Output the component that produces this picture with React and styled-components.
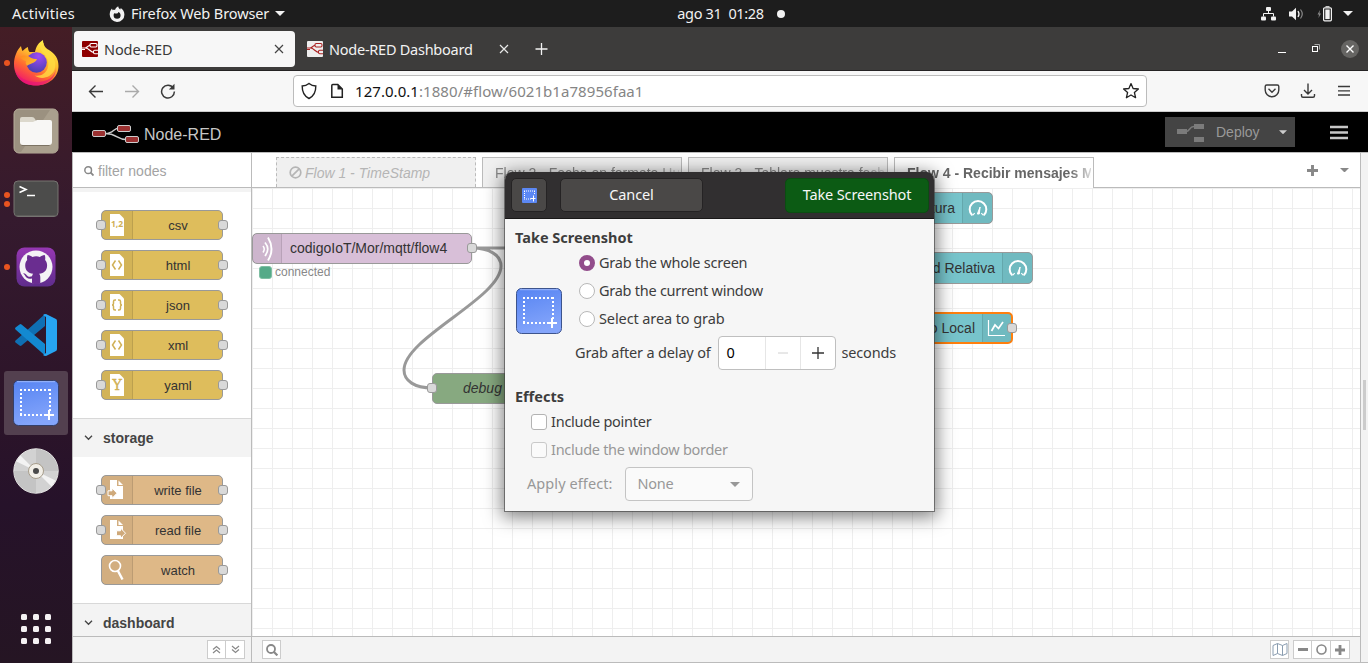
import React from "react";
import styled, { createGlobalStyle, css } from "styled-components";

const GlobalStyle = createGlobalStyle`
  * { box-sizing: border-box; }
  body { margin: 0; overflow: hidden; background: #fff; }
`;

const UI = '"Noto Sans", "Open Sans", sans-serif';
const ARIAL = '"Liberation Sans", Arial, sans-serif';

const Screen = styled.div`
  position: relative;
  width: 1368px;
  height: 663px;
  overflow: hidden;
  display: flex;
  flex-direction: column;
  font-family: ${UI};
  font-size: 14.5px;
`;

const Label = styled.span`
  white-space: pre;
  line-height: 20px;
  margin-top: ${(p) => (p.$flat ? 0 : -2)}px;
  font-size: ${(p) => p.$size || 14.5}px;
  letter-spacing: ${(p) => p.$track || 0}px;
  color: ${(p) => p.$color || "inherit"};
`;
const Heading = styled.h2`
  margin: ${(p) => p.$top || 0}px 0 0;
  font-size: 14.5px;
  line-height: 20px;
  font-weight: 700;
`;

/* ---------- top bar ---------- */
const TopBar = styled.header`
  height: 27px;
  flex: none;
  background: #1d1d1d;
  color: #f2f2f2;
  display: grid;
  grid-template-columns: 1fr auto 1fr;
  align-items: center;
`;
const TopLeft = styled.div`
  display: flex;
  align-items: center;
  padding-left: 12px;
`;
const AppMenu = styled.div`
  display: flex;
  align-items: center;
  margin-left: 34px;
  gap: 6px;
`;
const Clock = styled.div`
  display: flex;
  align-items: center;
  gap: 7px;
  margin-left: 100px;
`;
const Status = styled.div`
  display: flex;
  align-items: center;
  justify-content: flex-end;
  gap: 13px;
  padding-right: 15px;
  & > svg:last-child { margin-left: -2px; }
`;

/* ---------- dock ---------- */
const Desktop = styled.div`
  flex: 1;
  display: flex;
  min-height: 0;
`;
const Dock = styled.nav`
  width: 72px;
  flex: none;
  padding-top: 4px;
  display: flex;
  flex-direction: column;
  align-items: center;
  gap: 4px;
  background: linear-gradient(180deg, #441d25 0%, #351a2e 30%, #2c1429 60%, #26122a 75%, #251523 100%);
`;
const DockSlot = styled.div`
  position: relative;
  width: 64px;
  height: 64px;
  border-radius: 3px;
  display: flex;
  align-items: center;
  justify-content: center;
  background: ${(p) => (p.$active ? "#53404f" : "transparent")};
`;
const Dots = styled.div`
  position: absolute;
  left: 0;
  top: 0;
  height: 100%;
  display: flex;
  flex-direction: column;
  justify-content: center;
  gap: 3px;
  i {
    width: 6px;
    height: 6px;
    border-radius: 50%;
    background: #e95420;
  }
`;
const AppsGrid = styled.div`
  margin-top: auto;
  margin-bottom: 19px;
  display: grid;
  grid-template-columns: repeat(3, 6px);
  gap: 6px;
  i {
    height: 6px;
    border-radius: 1.5px;
    background: #f4f1f3;
  }
`;

/* ---------- browser ---------- */
const Browser = styled.main`
  flex: 1;
  min-width: 0;
  display: flex;
  flex-direction: column;
`;
const TabStrip = styled.div`
  height: 44px;
  flex: none;
  background: #3d3c3b;
  border-bottom: 1px solid #252324;
  display: flex;
  align-items: center;
  padding: 0 9px 0 2px;
  color: #f2f2f2;
`;
const BrowserTab = styled.div`
  width: ${(p) => p.$width}px;
  height: 36px;
  display: flex;
  align-items: center;
  gap: 6px;
  padding: 0 11px 0 8px;
  border-radius: 4px;
  margin-right: 4px;
  ${(p) =>
    p.$active &&
    css`
      background: #f7f7f7;
      color: #3a3a3a;
    `}
  & > svg:last-child { margin-left: auto; }
`;
const WindowButtons = styled.div`
  margin-left: auto;
  display: flex;
  align-items: center;
  gap: 25px;
`;
const CloseCircle = styled.div`
  width: 18px;
  height: 18px;
  margin-left: -5px;
  border-radius: 50%;
  background: #666563;
  display: flex;
  align-items: center;
  justify-content: center;
`;
const NavBar = styled.div`
  height: 41px;
  flex: none;
  background: #f7f7f7;
  border-bottom: 1px solid #cbcbcb;
  display: flex;
  align-items: center;
`;
const NavButtons = styled.div`
  width: 221px;
  display: flex;
  gap: 20px;
  padding-left: 16px;
`;
const UrlField = styled.div`
  width: 854px;
  height: 32px;
  background: #fff;
  border: 1px solid #bcbcbc;
  border-radius: 4px;
  display: flex;
  align-items: center;
  padding: 0 6px;
  & > svg:last-child { margin-left: auto; }
`;
const NavRight = styled.div`
  margin-left: auto;
  display: flex;
  gap: 19.5px;
  padding-right: 15px;
`;

/* ---------- node-red ---------- */
const EditorHeader = styled.div`
  height: 40px;
  flex: none;
  background: #000;
  display: flex;
  align-items: center;
  padding: 0 20px 0 19px;
  font: 16px ${ARIAL};
  color: #c7c7c7;
  svg { flex: none; }
`;
const Brand = styled.div`
  display: flex;
  align-items: center;
  gap: 4px;
  padding-top: 6px;
`;
const Deploy = styled.div`
  margin-left: auto;
  margin-right: 35px;
  width: 130px;
  height: 30px;
  background: #444;
  color: #999;
  font-size: 14px;
  display: flex;
  align-items: center;
  padding: 0 8px 0 12px;
  gap: 11px;
  & > svg:last-child { margin-left: auto; }
`;
const Editor = styled.div`
  flex: 1;
  min-height: 0;
  display: flex;
  border: solid #bbb;
  border-width: 1px 0 1px 1px;
  font-family: ${ARIAL};
`;
const Palette = styled.aside`
  width: 179px;
  flex: none;
  border-right: 1px solid #bbb;
  display: flex;
  flex-direction: column;
`;
const Search = styled.div`
  height: 35px;
  flex: none;
  border-bottom: 1px solid #bbb;
  display: flex;
  align-items: center;
  padding: 1px 0 0 11px;
  gap: 4px;
  font-size: 14px;
  color: #a3a3a3;
`;
const PaletteList = styled.div`
  flex: 1;
  min-height: 0;
  overflow: hidden;
  border-top: 4px solid #f3f3f3;
`;
const Category = styled.div`
  height: 39px;
  background: #f3f3f3;
  border-top: 1px solid #d8d8d8;
  display: flex;
  align-items: center;
  gap: 10px;
  padding-left: 11px;
  font-size: 14px;
  font-weight: 700;
  color: #444;
`;
const NodeStack = styled.div`
  padding: 18px 0 18px 28px;
  display: flex;
  flex-direction: column;
  gap: 10px;
`;
const NodeBox = styled.div`
  position: relative;
  width: ${(p) => p.$width || 122}px;
  height: ${(p) => p.$height || 30}px;
  border: ${(p) => (p.$selected ? "2px solid #ff7f0e" : "1px solid #999")};
  border-radius: 5px;
  background: ${(p) => p.$color};
  display: flex;
  font-size: ${(p) => p.$size || 13}px;
  color: #333;
`;
const NodeIcon = styled.div`
  width: ${(p) => p.$w || 31}px;
  flex: none;
  background: rgba(0, 0, 0, 0.05);
  border: solid rgba(0, 0, 0, 0.1);
  border-width: ${(p) => (p.$right ? "0 0 0 1px" : "0 1px 0 0")};
  display: flex;
  align-items: center;
  justify-content: center;
`;
const NodeText = styled.div`
  flex: 1;
  display: flex;
  align-items: center;
  white-space: nowrap;
  justify-content: ${(p) => p.$align || "center"};
  padding: ${(p) => (p.$align ? "0 7px 1px 8px" : "1px 7px 0 8px")};
  font-style: ${(p) => (p.$italic ? "italic" : "normal")};
`;
const Port = styled.i`
  position: absolute;
  ${(p) => (p.$side === "in" ? "left: -6px;" : "right: -6px;")}
  top: 9px;
  width: 10px;
  height: 10px;
  background: #d9d9d9;
  border: 1px solid #999;
  border-radius: 3px;
`;
const Footer = styled.div`
  height: 26px;
  flex: none;
  background: #f3f3f3;
  border-top: 1px solid #bbb;
  display: flex;
  align-items: center;
  justify-content: ${(p) => (p.$end ? "flex-end" : "space-between")};
  padding: ${(p) => p.$pad};
`;
const Group = styled.div`
  display: flex;
  gap: 4px;
`;
const FootButton = styled.div`
  width: ${(p) => p.$w || 19}px;
  height: 19px;
  margin-right: ${(p) => (p.$joined ? -1 : 0)}px;
  border: 1px solid #ccc;
  background: #fff;
  display: flex;
  align-items: center;
  justify-content: center;
`;
const Joined = styled.div`
  display: flex;
`;
const Workspace = styled.section`
  flex: 1;
  min-width: 0;
  display: flex;
  flex-direction: column;
`;
const FlowTabs = styled.div`
  height: 35px;
  flex: none;
  border-bottom: 1px solid #bbb;
  display: flex;
  align-items: flex-end;
  gap: 6px;
  padding: 0 11px 0 24px;
`;
const FlowTab = styled.div`
  width: 200px;
  height: ${(p) => (p.$active ? 31 : 30)}px;
  margin-bottom: ${(p) => (p.$active ? -1 : 0)}px;
  padding: 0 2px 0 12px;
  display: flex;
  align-items: center;
  gap: 3px;
  overflow: hidden;
  white-space: nowrap;
  font-size: 14px;
  border: 1px ${(p) => (p.$disabled ? "dashed" : "solid")} #bbb;
  border-bottom: 0;
  background: ${(p) => (p.$active ? "#fff" : "#f0f0f0")};
  color: ${(p) => (p.$disabled ? "#b5b5b5" : p.$active ? "#666" : "#888")};
  font-weight: ${(p) => (p.$active ? 700 : 400)};
  font-style: ${(p) => (p.$disabled ? "italic" : "normal")};
  svg { flex: none; }
  span {
    overflow: hidden;
    ${(p) => !p.$disabled && "mask-image: linear-gradient(90deg, #000 calc(100% - 22px), rgba(0,0,0,.25));"}
  }
`;
const TabActions = styled.div`
  margin-left: auto;
  height: 34px;
  display: flex;
  align-items: center;
  gap: 22px;
`;
const Canvas = styled.div`
  position: relative;
  flex: 1;
  min-height: 0;
  overflow: hidden;
  background-color: #fff;
  background-image: linear-gradient(#eee 1px, transparent 1px), linear-gradient(90deg, #eee 1px, transparent 1px);
  background-size: 20px 20px;
`;
const Wires = styled.svg`
  position: absolute;
  left: 0;
  top: 0;
`;
const Placed = styled.div`
  position: absolute;
  left: ${(p) => p.$x}px;
  top: ${(p) => p.$y}px;
`;
const NodeStatus = styled.div`
  display: flex;
  align-items: center;
  gap: 3px;
  font-size: 12px;
  color: #888;
  i {
    width: 13px;
    height: 13px;
    border-radius: 3px;
    background: #5a8;
    border: 1px solid #7fbfa3;
  }
`;
const Separator = styled.div`
  width: 8px;
  flex: none;
  border-left: 1px solid #bbb;
  background: #f3f3f3;
  display: flex;
  align-items: center;
  padding: 0 0 0 2px;
  i {
    width: 3px;
    height: 50px;
    background: #ccc;
    margin-top: -6px;
  }
`;

/* ---------- dialog ---------- */
const Dialog = styled.div`
  position: absolute;
  left: 504px;
  top: 172px;
  width: 431px;
  height: 340px;
  border: 1px solid rgba(60, 60, 60, 0.6);
  border-top: 0;
  border-radius: 8px 8px 0 0;
  box-shadow: 0 3px 18px 2px rgba(0, 0, 0, 0.5);
  background: #f6f6f6;
  background-clip: padding-box;
  overflow: hidden;
  color: #3d3d3d;
`;
const DialogBar = styled.div`
  height: 47px;
  background: #312f30;
  border-bottom: 1px solid #191818;
  display: flex;
  align-items: center;
  padding: 0 5px 0 6px;
  color: #f7f7f7;
`;
const BarButton = styled.div`
  width: ${(p) => p.$w}px;
  height: ${(p) => (p.$primary ? 35 : 34)}px;
  border-radius: 5px;
  background: ${(p) => (p.$primary ? "#0c5b14" : "#4a4847")};
  border: 1px solid ${(p) => (p.$primary ? "#0b4d12" : "#252324")};
  display: flex;
  align-items: center;
  justify-content: center;
  & + & { margin-left: 13px; }
  &:last-child { margin-left: auto; }
`;
const DialogBody = styled.div`
  padding: 8px 10px;
  display: flex;
  flex-direction: column;
`;
const Choices = styled.div`
  display: flex;
  margin-top: 2px;
`;
const ChoiceIcon = styled.div`
  width: 64px;
  padding: 39px 0 0 1px;
`;
const Option = styled.div`
  height: 28px;
  display: flex;
  align-items: center;
  gap: 4px;
  color: ${(p) => (p.$off ? "#989898" : "inherit")};
`;
const Radio = styled.i`
  width: 16px;
  height: 16px;
  border-radius: 50%;
  background: #fff;
  border: ${(p) => (p.$on ? "5px solid #924d8b" : "1px solid #b8b8b8")};
`;
const Check = styled.i`
  width: 16px;
  height: 16px;
  border-radius: 3px;
  background: ${(p) => (p.$off ? "#fafafa" : "#fff")};
  border: 1px solid ${(p) => (p.$off ? "#c9c9c9" : "#b3b3b3")};
`;
const DelayRow = styled.div`
  display: flex;
  align-items: center;
  gap: 6px;
  padding-left: 60px;
  margin-top: -2px;
`;
const Spin = styled.div`
  width: 118px;
  height: 34px;
  margin-left: 1px;
  border: 1px solid #bfbfbf;
  border-radius: 4px;
  background: #fff;
  display: flex;
  color: #000;
`;
const SpinCell = styled.div`
  flex: ${(p) => (p.$wide ? "1" : "0 0 35px")};
  padding-left: ${(p) => (p.$wide ? 8 : 0)}px;
  display: flex;
  align-items: center;
  justify-content: ${(p) => (p.$wide ? "flex-start" : "center")};
  & + & { border-left: 1px solid #e6e6e6; }
`;
const Effects = styled.div`
  padding: 2px 0 0 16px;
`;
const EffectRow = styled.div`
  display: flex;
  align-items: center;
  gap: 13px;
  padding-left: 12px;
  margin-top: 3px;
  color: #989898;
`;
const Select = styled.div`
  width: 128px;
  height: 34px;
  border: 1px solid #c4c4c4;
  border-radius: 4px;
  background: #fafafa;
  display: flex;
  align-items: center;
  justify-content: space-between;
  padding: 0 12px 0 11px;
`;

/* ---------- drawings ---------- */
const Caret = ({ w = 10, h = 5, color = "#f2f2f2" }) => (
  <svg width={w} height={h} viewBox="0 0 10 5"><path d="M0 0h10l-5 5z" fill={color} /></svg>
);
const Cross = ({ color }) => (
  <svg width="10" height="10" viewBox="0 0 10 10" stroke={color} strokeWidth="1.2"><path d="M1 1l8 8M9 1l-8 8" /></svg>
);
const Plus = ({ s = 12, w = 1.2, color = "#333" }) => (
  <svg width={s} height={s} viewBox="0 0 12 12" stroke={color} strokeWidth={w}><path d="M6 0v12M0 6h12" /></svg>
);
const Magnifier = ({ s = 10, color = "#888" }) => (
  <svg width={s} height={s} viewBox="0 0 12 12" fill="none" stroke={color} strokeWidth="1.8"><circle cx="5" cy="5" r="4" /><path d="M8 8l3.4 3.4" strokeWidth="2.2" /></svg>
);
const Favicon = ({ bg, fg }) => (
  <svg width="16" height="16" viewBox="0 0 16 16" fill="none" stroke={fg} strokeWidth="1.1">
    <rect width="16" height="16" rx="1" fill={bg} stroke="none" />
    <path d="M0 7h3C5.500 7 5.500 4.500 8 4.500M3.500 7C7 7 8.500 11.500 12 11.500M0 8.500h3" />
    <rect x="8" y="2.500" width="7" height="3.500" rx="1.200" />
    <rect x="11.500" y="9.300" width="5.500" height="3.500" rx="1.200" />
  </svg>
);
const ShotIcon = ({ s = 46, edge = "#3d548d" }) => (
  <svg width={s} height={s} viewBox="0 0 46 46">
    <defs>
      <linearGradient id="shot" x1="0" y1="0" x2="0.300" y2="1">
        <stop offset="0" stopColor="#5583f2" /><stop offset="1" stopColor="#84a5fb" />
      </linearGradient>
    </defs>
    <rect x="0.500" y="0.500" width="45" height="45" rx="5" fill="url(#shot)" stroke={edge} />
    <path d="M4 1.700h38" stroke="#9db8fb" />
    <path d="M7 10h30M7 35h24M8 9v26M37 9v22" stroke="#fff" strokeWidth="2" strokeDasharray="2 2" fill="none" />
    <path d="M36 30v10M31 35h10" stroke="#fff" strokeWidth="2" />
  </svg>
);
const SmallShot = () => (
  <svg width="15" height="15" viewBox="0 0 15 15">
    <rect width="15" height="15" rx="1" fill="#5c88f4" />
    <path d="M2 3h11M2 11h7M2.500 3v8M12.500 3v4" stroke="#fff" strokeDasharray="1 1" />
    <path d="M11.500 7.500v6M8.500 10.500h5" stroke="#fff" />
  </svg>
);
const FirefoxGlyph = () => (
  <svg width="16" height="16" viewBox="0 0 16 16">
    <path fillRule="evenodd" fill="#f2f2f2" d="M.7 8.600C.7 6 1.600 4 3 2.600l.6 1.700c.8-.5 1.500-.6 2.400-.4C6.500 2.300 7.800 1 9.200.3c.1 1.600.9 2.300 2 3.100.4-.5.5-.8.500-1.300 2.300 1.500 3.700 3.700 3.700 6.300A7.300 7.300 0 0 1 8 15.900 7.300 7.300 0 0 1 .7 8.600zM5.200 7.200c-.4.7-.6 1.200-.6 2a3.500 3.500 0 0 0 7 0c0-1.500-.9-2.800-2.200-3.300-.2.800-.6 1.300-1.300 1.600-.9.300-1.500 0-2.900-.3z" />
  </svg>
);
const Firefox = () => (
  <svg width="46" height="48" viewBox="0 0 46 48">
    <defs>
      <linearGradient id="ffa" x1="0.800" y1="0.100" x2="0.300" y2="1">
        <stop offset="0" stopColor="#fff04a" /><stop offset="0.350" stopColor="#ffbd2e" /><stop offset="0.650" stopColor="#ff6a30" /><stop offset="1" stopColor="#f0136e" />
      </linearGradient>
      <radialGradient id="ffb" cx="0.600" cy="0.200" r="0.800">
        <stop offset="0" stopColor="#a04bf5" /><stop offset="1" stopColor="#4b3fb0" />
      </radialGradient>
      <linearGradient id="ffc" x1="0" y1="0" x2="1" y2="0.500">
        <stop offset="0" stopColor="#ff8a1f" /><stop offset="1" stopColor="#ffb62e" />
      </linearGradient>
    </defs>
    <path d="M1 25C1 18 4 11 8 7c.4 2.500 1 4 1.500 5 1.500-1.500 3.500-3 5.500-4 0 2 .5 4 1.500 5H22c1-5 3-9 8-12 0 5 2 8 6 10 6 4 9.500 8 9.500 16C45.500 38 36 46.500 23 46.500S1 38 1 25z" fill="url(#ffa)" />
    <path d="M43 29c-1 9-9 14-19 14S5 39 2 31c2 10 10 15.500 21 15.500S43 39 43 29z" fill="#e2127c" opacity="0.600" />
    <circle cx="23.500" cy="23.500" r="10.300" fill="url(#ffb)" />
    <path d="M7 18c4-2.500 8-1.500 10.500.500 2 1.500 4 1.300 6.500 1.500-.6 2.500-3 3.300-5.500 4.500-2.500 1-3.500 1.500-4.500 2.500-1.500-2-1.500-4-1-5-2-.3-4-1.500-6-4z" fill="url(#ffc)" />
    <path d="M31 15c4 4 5.500 9 3.500 14.500-2 5.500-7 8-13 7 7 5 17 2 20-6 2.500-7-1-13-5.500-17-3-2.500-5-6-5.500-10-3.500 4-3.500 8 .5 11.500z" fill="#ffdc42" opacity="0.800" />
  </svg>
);
const Files = () => (
  <svg width="46" height="46" viewBox="0 0 46 46">
    <rect x="1" y="1" width="44" height="44" rx="5" fill="#9b9180" stroke="#b8ae9b" />
    <path d="M37 2h4a3 3 0 0 1 3 3v36a3 3 0 0 1-3 3H8z" fill="#aaa08e" />
    <path d="M7 14v-3q0-2 2-2h10q2 0 3 2l1 2h13v4H7z" fill="#dcd8cc" />
    <path d="M7 14h13l4-2h13q2 0 2 2v20q0 3-3 3H10q-3 0-3-3z" fill="#f8f7f5" />
    <path d="M8.500 37.500h28" stroke="#7c7363" />
  </svg>
);
const Terminal = () => (
  <svg width="46" height="38" viewBox="0 0 46 38">
    <rect x="1" y="1" width="44" height="35.500" rx="4" fill="#4c4c4b" stroke="#767471" />
    <path d="M2 35.500h42" stroke="#5e5d5b" />
    <path d="M6.500 6.500l6.500 3-6.500 3" fill="none" stroke="#fff" strokeWidth="1.600" />
    <path d="M14 15.500h8" stroke="#fff" strokeWidth="1.500" />
  </svg>
);
const Github = () => (
  <svg width="40" height="40" viewBox="0 0 40 40">
    <defs><linearGradient id="gh" x1="0" y1="0" x2="0" y2="1"><stop offset="0" stopColor="#9637b3" /><stop offset="1" stopColor="#5f2d8c" /></linearGradient></defs>
    <rect x="0.500" y="0.500" width="39" height="39" rx="8" fill="url(#gh)" />
    <circle cx="20" cy="20" r="16.500" fill="#f4f3f5" />
    <path d="M16 36.500v-5c-4 1-6-1-7-3-.6-1-1.500-2-2-2.300 2-.4 3 1 4 2.300 1 1.300 3 1.700 5 .8.200-1.200.6-2 1.200-2.600-5-.7-8-3-8-8.500 0-2.200.8-4 2-5.300-.3-1.500-.3-3.500.4-5 2 .2 3.500 1 4.800 2 2.500-.7 5-.7 7.500 0 1.300-1 2.800-1.800 4.800-2 .7 1.500.7 3.500.4 5 1.200 1.300 2 3.100 2 5.300 0 5.500-3 7.800-8 8.500.8.800 1.200 2 1.200 3.600v6.200c-2.500.8-5.500.8-8.300 0z" fill="#6a2d90" />
  </svg>
);
const VsCode = () => (
  <svg width="44" height="44" viewBox="0 0 44 44">
    <path d="M1.500 27.500l3.500-3L31 1v12L7.500 32.500q-1 .8-2 0l-4-3q-1-1 0-2z" fill="#0f6fb3" />
    <path d="M1.500 16.500q-1-1 0-2l4-3q1-.8 2 0L31 31v11.500z" fill="#1389d1" />
    <path d="M32 1l10 5q1 .5 1 2v28q0 1.500-1 2l-10 5q-2 0-3-1l3-2V4l-3-2q1-1 3-1z" fill="#27a5f2" />
  </svg>
);
const Disc = () => (
  <svg width="46" height="46" viewBox="0 0 46 46">
    <circle cx="23" cy="23" r="22.200" fill="#d2d2d2" stroke="#e8e8e6" />
    <path d="M23 23V1A22 22 0 0 1 45 23z" fill="#c4c4c4" /><path d="M23 23v22A22 22 0 0 1 1 23z" fill="#c4c4c4" />
    <path d="M23 23L3.500 13.500l4-6zM23 23l19.500 9.500-4 6z" fill="#f3f3f3" />
    <circle cx="23" cy="23" r="7.500" fill="#f2efe8" stroke="#a79d8b" />
    <circle cx="23" cy="23" r="3" fill="#4a4a4a" />
  </svg>
);
const PageIcon = ({ kind, bg }) => (
  <svg width="18" height="24" viewBox="0 0 18 24">
    <path d="M2 1h9.500L16 5.500V23H2z" fill="#fff" />
    <g fill="none" stroke={bg} strokeWidth="1.500">
      {(kind === "html" || kind === "xml") && <path d="M7.500 7.500L4.500 12l3 4.500M10.500 7.500l3 4.500-3 4.500" />}
      {kind === "json" && <path d="M8 7H7q-1.500 0-1.500 1.500v2Q5.500 12 4 12q1.500 0 1.500 1.500v2Q5.500 17 7 17h1M10 7h1q1.500 0 1.500 1.500v2q0 1.500 1.500 1.500-1.500 0-1.500 1.500v2q0 1.500-1.500 1.500h-1" />}
    </g>
    {kind === "csv" && <text x="9" y="14" fontFamily="Noto Sans" fontWeight="700" fontSize="8.500" textAnchor="middle" fill={bg}>1,2</text>}
    {kind === "yaml" && <text x="9" y="17" fontFamily="DejaVu Serif" fontSize="14" textAnchor="middle" fill={bg} stroke={bg} strokeWidth="0.400">Y</text>}
  </svg>
);
const FileIcon = ({ out }) => (
  <svg width="20" height="22" viewBox="0 0 20 22">
    {out ? (
      <>
        <path d="M3 1h7v6h6v13H3z" fill="#fff" /><path d="M11.500 1.500L16 6h-4.500z" fill="#fff" />
        <path d="M9.500 11.800h4V9l5 5.200-5 5.200v-2.700h-4z" fill="#cfa97a" stroke="#fff" />
      </>
    ) : (
      <>
        <path d="M3 1h7v6h6v13H3z" fill="#fff" /><path d="M11.500 1.500L16 6h-4.500z" fill="#fff" />
        <path d="M1 11.800h4V9l5 5.200-5 5.200v-2.700H1z" fill="#cfa97a" stroke="#fff" />
      </>
    )}
  </svg>
);
const WatchIcon = () => (
  <svg width="18" height="22" viewBox="0 0 18 22" fill="none" stroke="#fff">
    <circle cx="7" cy="7" r="5.500" strokeWidth="1.600" /><path d="M10 12l4.500 8.500" strokeWidth="2.400" />
  </svg>
);
const Gauge = () => (
  <svg width="22" height="20" viewBox="0 0 22 20" fill="none" stroke="#fff" strokeWidth="2">
    <path d="M5.200 17.300A8.300 8.300 0 1 1 16.800 17.300" /><path d="M5.500 17.300l2.200-2.200M16.500 17.300l-2.200-2.200" strokeWidth="1.200" /><path d="M10.300 16l2.800-7-.8 7z" strokeWidth="1" fill="#fff" />
  </svg>
);
const ChartIcon = () => (
  <svg width="20" height="20" viewBox="0 0 20 20" fill="none" stroke="#fff" strokeWidth="1.200">
    <path d="M1.500 2v15.500H18" /><path d="M4.500 13l3.500-6 3.500 3.500L16 4" strokeWidth="1.700" />
  </svg>
);
const MqttIcon = () => (
  <svg width="20" height="26" viewBox="0 0 20 26" fill="none" stroke="#fff">
    <path d="M6 10q2.500 3 0 6.500" strokeWidth="1.500" /><path d="M8 6.500q5.500 6.500 0 13.500" strokeWidth="1.700" /><path d="M11 1.500q7 11.500 0 23" strokeWidth="1.900" />
  </svg>
);
const Chevron = () => (
  <svg width="9" height="6" viewBox="0 0 9 6" fill="none" stroke="#444" strokeWidth="1.300"><path d="M1 .8l3.500 3.500L8 .8" /></svg>
);
const DoubleChevron = ({ down }) => (
  <svg width="9" height="9" viewBox="0 0 9 9" fill="none" stroke="#888" strokeWidth="1.200" transform={down ? "rotate(180)" : undefined}><path d="M1 4.500l3.500-3L8 4.500M1 8l3.500-3L8 8" /></svg>
);

const PaletteNode = ({ name, color, icon, noInput }) => (
  <NodeBox $color={color}>
    <NodeIcon>{icon}</NodeIcon>
    <NodeText>{name}</NodeText>
    {!noInput && <Port $side="in" />}
    <Port $side="out" />
  </NodeBox>
);

const YELLOW = "#debd5c";
const TAN = "#deb887";
const TEAL = "#77c4cb";

export default function App() {
  return (
    <>
      <GlobalStyle />
      <Screen>
        <TopBar>
          <TopLeft>
            <Label $track={0.25}>Activities</Label>
            <AppMenu>
              <FirefoxGlyph />
              <Label $track={-0.1}>Firefox Web Browser</Label>
              <Caret />
            </AppMenu>
          </TopLeft>
          <Clock>
            <Label $track={-0.35}>ago 31</Label>
            <Label $track={-0.35}>01:28</Label>
            <svg width="20" height="8" viewBox="0 0 20 8"><circle cx="10" cy="4" r="4" fill="#f2f2f2" /></svg>
          </Clock>
          <Status>
            <svg width="15" height="14" viewBox="0 0 15 14" fill="#f2f2f2"><rect x="5" y="0" width="5" height="4" rx="1" /><rect x="0" y="9.500" width="5" height="4" rx="1" /><rect x="10" y="9.500" width="5" height="4" rx="1" /><path d="M2.500 9.500v-3h10v3M7.500 4v3" fill="none" stroke="#f2f2f2" /></svg>
            <svg width="15" height="14" viewBox="0 0 15 14"><path d="M0 4.500h3L7 .8v12.400L3 9.500H0z" fill="#f2f2f2" /><path d="M9 4q2 3 0 6" stroke="#f2f2f2" fill="none" strokeWidth="1.300" /><path d="M11.500 2.500q3.500 4.500 0 9" stroke="#8a8a8a" fill="none" strokeWidth="1.200" /></svg>
            <svg width="15" height="16" viewBox="0 0 15 16"><path d="M3 4L.5 8.500H2L1.500 12 4 7.500H2.500z" fill="#8a8a8a" /><rect x="6.600" y="1.800" width="7.800" height="13" rx="1" fill="none" stroke="#f2f2f2" strokeWidth="1.200" /><rect x="8.300" y="3.500" width="4.400" height="9.600" fill="#f2f2f2" /><path d="M8.500 .7h4" stroke="#f2f2f2" /></svg>
            <Caret />
          </Status>
        </TopBar>
        <Desktop>
          <Dock>
            <DockSlot><Dots><i /></Dots><Firefox /></DockSlot>
            <DockSlot><Files /></DockSlot>
            <DockSlot><Dots><i /><i /></Dots><Terminal /></DockSlot>
            <DockSlot><Dots><i /></Dots><Github /></DockSlot>
            <DockSlot><VsCode /></DockSlot>
            <DockSlot $active><ShotIcon edge="#34406b" /></DockSlot>
            <DockSlot><Disc /></DockSlot>
            <AppsGrid>{Array.from({ length: 9 }, (_, i) => <i key={i} />)}</AppsGrid>
          </Dock>
          <Browser>
            <TabStrip>
              <BrowserTab $active $width={221}>
                <Favicon bg="#8f0000" fg="#fff" />
                <Label $flat $track={-0.1}>Node-RED</Label>
                <Cross color="#444" />
              </BrowserTab>
              <BrowserTab $width={221}>
                <Favicon bg="#eee" fg="#a22" />
                <Label $flat $track={-0.25}>Node-RED Dashboard</Label>
                <Cross color="#e8e8e8" />
              </BrowserTab>
              <svg width="34" height="12" viewBox="0 0 34 12" stroke="#f2f2f2" strokeWidth="1.300"><path d="M17.500 0v12M11.500 6h12" /></svg>
              <WindowButtons>
                <svg width="9" height="10"><path d="M0 8.500h8" stroke="#fff" /></svg>
                <svg width="9" height="9" viewBox="0 0 9 9" fill="none"><rect x="0.500" y="2.500" width="5" height="5" stroke="#fff" /><path d="M2.500 .5h5v5" stroke="#aaa" /></svg>
                <CloseCircle><svg width="8" height="8" viewBox="0 0 8 8" stroke="#fff" strokeWidth="1.400"><path d="M.5.5l7 7M7.500.5l-7 7" /></svg></CloseCircle>
              </WindowButtons>
            </TabStrip>
            <NavBar>
              <NavButtons>
                <svg width="16" height="16" viewBox="0 0 16 16" fill="none" stroke="#3a3a3a" strokeWidth="1.400"><path d="M15 8.500H1.500M7.500 2.500l-6 6 6 6" /></svg>
                <svg width="16" height="16" viewBox="0 0 16 16" fill="none" stroke="#aaa" strokeWidth="1.400"><path d="M1 8.500h13.500M8.500 2.500l6 6-6 6" /></svg>
                <svg width="16" height="16" viewBox="0 0 16 16" fill="none" stroke="#3a3a3a" strokeWidth="1.500"><path d="M13.300 5A6.400 6.400 0 1 0 14.400 8.500" /><path d="M14.500.8v5.700H8.800z" fill="#3a3a3a" stroke="none" /></svg>
              </NavButtons>
              <UrlField>
                <svg width="18" height="18" viewBox="0 0 18 18" fill="none" stroke="#222" strokeWidth="1.400"><path d="M9 1.500Q12 3.800 15.800 4 16 13 9 16.500 2 13 2.200 4 6 3.800 9 1.500z" /></svg>
                <svg width="37" height="16" viewBox="0 0 37 16" fill="none" stroke="#222" strokeWidth="1.500"><path d="M13.800 2.500v11.800h10.500V6L19.800 1.500h-5q-1 0-1 1z" /><path d="M19.500 1.500v5h5z" fill="#222" stroke="none" /></svg>
                <Label $flat $size={15} $color="#111" $track={0.05}>127.0.0.1</Label>
                <Label $flat $size={15} $color="#858585" $track={0.06}>:1880/#flow/6021b1a78956faa1</Label>
                <svg width="18" height="18" viewBox="0 0 18 18" fill="none" stroke="#222" strokeWidth="1.300" strokeLinejoin="round"><path d="M9 1.600l2.100 4.900 5.300.5-4 3.500 1.200 5.200L9 13l-4.600 2.700 1.200-5.200-4-3.500 5.300-.5z" /></svg>
              </UrlField>
              <NavRight>
                <svg width="16" height="16" viewBox="0 0 16 16" fill="none" stroke="#3a3a3a" strokeWidth="1.400"><path d="M2.700 2h10.600q1.500 0 1.500 1.500V7a6.800 6.800 0 0 1-13.600 0V3.500Q1.200 2 2.700 2z" /><path d="M4.500 5.800L8 9.200l3.500-3.400" /></svg>
                <svg width="16" height="16" viewBox="0 0 16 16" fill="none" stroke="#3a3a3a" strokeWidth="1.400"><path d="M8 .5v10.500M4 7l4 4 4-4M1.500 11v1.800q0 1.500 1.500 1.500h10q1.500 0 1.500-1.500V11" /></svg>
                <svg width="18" height="16" viewBox="0 0 18 16" stroke="#3a3a3a" strokeWidth="1.300"><path d="M3 3.500h12M3 7.800h12M3 12h12" /></svg>
              </NavRight>
            </NavBar>
            <EditorHeader>
              <Brand>
                <svg width="49" height="22" viewBox="0 0 49 22" fill="#9b3131" stroke="#ccc">
                  <path d="M14 9.500C24 9.500 21 4 29 4M14 9.500C26 9.500 26 15.500 35 15.500" fill="none" strokeWidth="1.300" />
                  <rect x="1.500" y="6.500" width="13" height="6" rx="1.500" /><rect x="26.500" y="1.500" width="13" height="6" rx="1.500" /><rect x="34.500" y="12.500" width="13" height="6" rx="1.500" />
                </svg>
                Node-RED
              </Brand>
              <Deploy>
                <svg width="28" height="20" viewBox="0 0 28 20" fill="#7b7b7b"><rect y="7" width="10" height="5" /><rect x="17" y="2" width="10" height="5" /><rect x="17" y="15" width="10" height="5" /><path d="M9 9.500c4 0 3-5 8-5" fill="none" stroke="#7b7b7b" strokeWidth="1.500" /></svg>
                Deploy
                <Caret w={8} h={4.500} color="#ccc" />
              </Deploy>
              <svg width="18" height="15" viewBox="0 0 18 15" stroke="#c7c7c7" strokeWidth="2.600"><path d="M0 2h18M0 7.500h18M0 13h18" /></svg>
            </EditorHeader>
            <Editor>
              <Palette>
                <Search><Magnifier />filter nodes</Search>
                <PaletteList>
                  <NodeStack>
                    {["csv", "html", "json", "xml", "yaml"].map((n) => (
                      <PaletteNode key={n} name={n} color={YELLOW} icon={<PageIcon kind={n} bg="#d0b156" />} />
                    ))}
                  </NodeStack>
                  <Category><Chevron />storage</Category>
                  <NodeStack>
                    <PaletteNode name="write file" color={TAN} icon={<FileIcon />} />
                    <PaletteNode name="read file" color={TAN} icon={<FileIcon out />} />
                    <PaletteNode name="watch" color={TAN} icon={<WatchIcon />} noInput />
                  </NodeStack>
                  <Category><Chevron />dashboard</Category>
                </PaletteList>
                <Footer $end $pad="0 6px 0 0">
                  <FootButton $joined><DoubleChevron /></FootButton>
                  <FootButton $w={20}><DoubleChevron down /></FootButton>
                </Footer>
              </Palette>
              <Workspace>
                <FlowTabs>
                  <FlowTab $disabled>
                    <svg width="13" height="13" viewBox="0 0 13 13" fill="none" stroke="#b5b5b5" strokeWidth="1.700"><circle cx="6.500" cy="6.500" r="5.300" /><path d="M2.800 10.200l7.400-7.400" /></svg>
                    <span>Flow 1 - TimeStamp</span>
                  </FlowTab>
                  <FlowTab><span>Flow 2 - Fecha en formato Humano</span></FlowTab>
                  <FlowTab><span>Flow 3 - Tablero muestra fecha y hora</span></FlowTab>
                  <FlowTab $active><span>Flow 4 - Recibir mensajes MQTT</span></FlowTab>
                  <TabActions>
                    <Plus s={11} w={3.2} color="#888" />
                    <Caret w={9} h={4.500} color="#888" />
                  </TabActions>
                </FlowTabs>
                <Canvas>
                  <Wires width="700" height="300" fill="none" stroke="#999" strokeWidth="3">
                    <path d="M220 60H420M220 60C237 60 249 67 249 78C249 110 152 150 152 182C152 193 163 200 180 200" />
                  </Wires>
                  <Placed $x={0} $y={45}>
                    <NodeBox $color="#d8bfd8" $width={220} $height={31} $size={14}>
                      <NodeIcon $w={29}><MqttIcon /></NodeIcon>
                      <NodeText $align="flex-start">codigoIoT/Mor/mqtt/flow4</NodeText>
                      <Port $side="out" />
                    </NodeBox>
                  </Placed>
                  <Placed $x={7} $y={77}>
                    <NodeStatus><i />connected</NodeStatus>
                  </Placed>
                  <Placed $x={180} $y={185}>
                    <NodeBox $color="#87a980" $width={140} $height={31} $size={14}>
                      <NodeText $italic $align="flex-start"><svg width="22" height="1" />debug</NodeText>
                      <Port $side="in" />
                    </NodeBox>
                  </Placed>
                  <Placed $x={600} $y={4}>
                    <NodeBox $color={TEAL} $width={141} $height={32} $size={14}>
                      <NodeText $align="flex-end">Temperatura</NodeText>
                      <NodeIcon $right $w={30}><Gauge /></NodeIcon>
                    </NodeBox>
                  </Placed>
                  <Placed $x={600} $y={64}>
                    <NodeBox $color={TEAL} $width={181} $height={32} $size={14}>
                      <NodeText $align="flex-end">Humedad Relativa</NodeText>
                      <NodeIcon $right $w={30}><Gauge /></NodeIcon>
                    </NodeBox>
                  </Placed>
                  <Placed $x={620} $y={124}>
                    <NodeBox $color={TEAL} $width={141} $height={32} $size={14} $selected>
                      <NodeText $align="flex-end">Tiempo Local</NodeText>
                      <NodeIcon $right $w={29}><ChartIcon /></NodeIcon>
                      <Port $side="out" />
                    </NodeBox>
                  </Placed>
                </Canvas>
                <Footer $pad="0 10px 0 10px">
                  <FootButton><Magnifier s={12} /></FootButton>
                  <Group>
                    <FootButton>
                      <svg width="16" height="13" viewBox="0 0 16 13" fill="none" stroke="#8a9db0"><path d="M1 2.500l4.500-2 5 2 4.500-2v10l-4.500 2-5-2-4.500 2zM5.500.5v10M10.500 2.500v10" /></svg>
                    </FootButton>
                    <Joined>
                      <FootButton $joined><svg width="10" height="3"><rect width="10" height="3" fill="#888" /></svg></FootButton>
                      <FootButton $joined $w={20}><svg width="11" height="11" viewBox="0 0 11 11" fill="none" stroke="#888" strokeWidth="1.600"><circle cx="5.500" cy="5.500" r="4.500" /></svg></FootButton>
                      <FootButton $w={20}><Plus s={10} w={3.400} color="#888" /></FootButton>
                    </Joined>
                  </Group>
                </Footer>
              </Workspace>
              <Separator><i /></Separator>
            </Editor>
          </Browser>
        </Desktop>
        <Dialog>
          <DialogBar>
            <BarButton $w={36}><SmallShot /></BarButton>
            <BarButton $w={143}><Label $track={-0.1}>Cancel</Label></BarButton>
            <BarButton $w={144} $primary><Label $track={-0.13}>Take Screenshot</Label></BarButton>
          </DialogBar>
          <DialogBody>
            <Heading>Take Screenshot</Heading>
            <Choices>
              <ChoiceIcon><ShotIcon /></ChoiceIcon>
              <div>
                <Option><Radio $on /><Label $track={-0.22}>Grab the whole screen</Label></Option>
                <Option><Radio /><Label $track={-0.26}>Grab the current window</Label></Option>
                <Option><Radio /><Label $track={-0.1}>Select area to grab</Label></Option>
              </div>
            </Choices>
            <DelayRow>
              <Label $track={-0.17}>Grab after a delay of</Label>
              <Spin>
                <SpinCell $wide><Label>0</Label></SpinCell>
                <SpinCell><svg width="10" height="2"><path d="M0 1h10" stroke="#d0d0d0" /></svg></SpinCell>
                <SpinCell><Plus s={12} w={1.300} color="#333" /></SpinCell>
              </Spin>
              <Label $track={-0.2}>seconds</Label>
            </DelayRow>
            <Heading $top={16}>Effects</Heading>
            <Effects>
              <Option><Check /><Label $track={-0.25}>Include pointer</Label></Option>
              <Option $off><Check $off /><Label $track={-0.28}>Include the window border</Label></Option>
            </Effects>
            <EffectRow>
              <Label $track={0.08}>Apply effect:</Label>
              <Select><Label $track={-0.2}>None</Label><Caret color="#989898" /></Select>
            </EffectRow>
          </DialogBody>
        </Dialog>
      </Screen>
    </>
  );
}
